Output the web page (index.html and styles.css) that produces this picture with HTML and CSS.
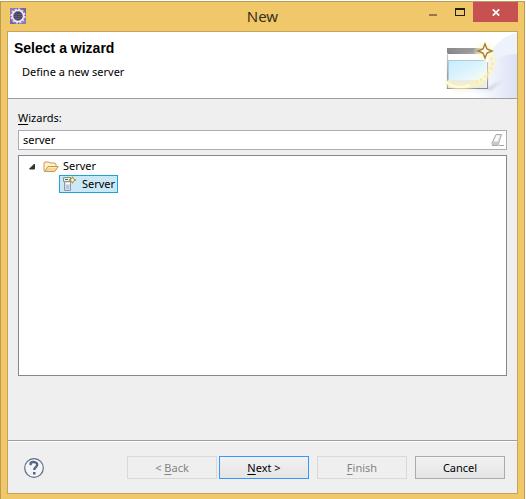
FILE: index.html
```html
<!DOCTYPE html>
<html lang="en">
<head>
<meta charset="utf-8">
<title>New</title>
<link rel="stylesheet" href="styles.css">
</head>
<body>
<div class="window">
  <header class="titlebar">
    <svg class="app-icon" width="16" height="16" viewBox="0 0 16 16" aria-hidden="true">
      <rect width="16" height="16" fill="#7763a5"/>
      <path d="M0 0h5L0 6zM16 16v-5l-6 5z" fill="#8e7ab8"/>
      <circle cx="8" cy="8" r="6.9" fill="none" stroke="#dddae4" stroke-width="1.6" stroke-dasharray="2.3 1.3"/>
      <circle cx="8" cy="8" r="5.6" fill="#4d4269" stroke="#eceaf0" stroke-width="1.7"/>
      <path d="M4 6.5h8M4 8.5h8M5 10.5h6" stroke="#6c6088" stroke-width=".8"/>
    </svg>
    <h1 class="window-title">New</h1>
    <div class="window-controls">
      <button class="control" type="button" aria-label="Minimize">
        <svg width="10" height="10" viewBox="0 0 10 10"><path d="M1 7h8v2H1z" fill="#93794c"/></svg>
      </button>
      <button class="control" type="button" aria-label="Maximize">
        <svg width="10" height="8" viewBox="0 0 10 8"><path fill-rule="evenodd" d="M0 0h10v8H0zM1 2v5h8V2z" fill="#211f1a"/></svg>
      </button>
      <button class="control control-close" type="button" aria-label="Close">
        <svg width="8" height="7" viewBox="0 0 8 7"><path d="M.8.3l6.4 6.4M7.2.3L.8 6.7" stroke="#fff" stroke-width="1.7"/></svg>
      </button>
    </div>
  </header>
  <main class="dialog">
    <section class="banner">
      <div class="banner-text">
        <h2 class="banner-title">Select a wizard</h2>
        <p class="banner-message">Define a new server</p>
      </div>
      <svg class="banner-art" width="77" height="66" viewBox="0 0 77 66" aria-hidden="true">
        <defs>
          <linearGradient id="swoosh" x1="0" y1="0" x2="1" y2="0"><stop offset="0" stop-color="#fff"/><stop offset="1" stop-color="#dbe2f6"/></linearGradient>
          <linearGradient id="bar" x1="0" y1="0" x2="1" y2="0"><stop offset="0" stop-color="#808080"/><stop offset=".65" stop-color="#a5a5a5"/><stop offset="1" stop-color="#eeeedc"/></linearGradient>
          <linearGradient id="pane" x1="0" y1="0" x2="1" y2="1"><stop offset="0" stop-color="#c6edff"/><stop offset=".45" stop-color="#d8f2fd"/><stop offset="1" stop-color="#fbfdf5"/></linearGradient>
          <linearGradient id="frame" x1="0" y1="0" x2="0" y2="1"><stop offset="0" stop-color="#ccc"/><stop offset="1" stop-color="#858b94"/></linearGradient>
          <radialGradient id="glow"><stop offset="0" stop-color="#fff6bd"/><stop offset="1" stop-color="#fff9d2" stop-opacity="0"/></radialGradient>
          <filter id="soft" x="-30%" y="-30%" width="160%" height="160%"><feGaussianBlur stdDeviation="1.6"/></filter>
        </defs>
        <path d="M77 1C63 5 54 13 48 24L34 66h43z" fill="url(#swoosh)"/>
        <path d="M77 1C66 4 59 9 53 17L50 30c8-5 17-8 27-8z" fill="#eef2fb"/>
        <path d="M46 57l17-9-12 10-43 1z" fill="#b5b3cb" opacity=".6" filter="url(#soft)"/>
        <rect x="7" y="16" width="41" height="41" fill="#fff"/>
        <rect x="7" y="16" width="40" height="6" fill="url(#bar)"/>
        <path d="M7 17h35M7 19h33" stroke="#929292"/>
        <rect x="8" y="28" width="38" height="20" fill="url(#pane)"/>
        <rect x="8" y="48" width="38" height="8" fill="#edebdd"/>
        <path d="M8 28h36v1H8zM8 28h1v20H8z" fill="#b5cbd4"/>
        <path d="M7.5 21v35.5h40V30" fill="none" stroke="url(#frame)" stroke-width="1.2"/>
        <path d="M51 22c6 15-6 29-25 33-9 2-17-1-20-6" fill="none" stroke="#fff6b8" stroke-width="5" opacity=".7" filter="url(#soft)"/>
        <circle cx="45" cy="19" r="12" fill="url(#glow)"/>
        <path d="M51 26c4 10-3 19-18 26" fill="none" stroke="#f8dda0" stroke-width="2" stroke-dasharray="2 3" opacity=".75"/>
        <path d="M6 49c4 6 14 8 24 4" fill="none" stroke="#fffbe2" stroke-width="2"/>
        <path d="M45 12l2 5 5 2-5 2-2 5-2-5-5-2 5-2z" fill="#fffced" stroke="#a97c2d" stroke-width="1.4"/>
      </svg>
    </section>
    <section class="content">
      <label class="field-label" for="filter"><u>W</u>izards:</label>
      <div class="filter">
        <input class="filter-input" id="filter" type="text" value="server">
        <button class="filter-clear" type="button" aria-label="Clear">
          <svg width="14" height="13" viewBox="0 0 14 13"><path d="M5 .5h5.5L7 11.5H1.5L1 9z" fill="#e5e5e5" stroke="#aaa"/><path d="M2 8h5.5L10 1.5 7 11H2z" fill="#c9c9c9"/><path d="M5.5 1.5h3L6.5 7H3.4z" fill="#fafafa"/><path d="M8 11.5h5" stroke="#aaa"/></svg>
        </button>
      </div>
      <div class="tree" role="tree" aria-label="Wizards">
        <div class="tree-row" role="treeitem" aria-expanded="true">
          <svg class="twisty" width="7" height="7" viewBox="0 0 7 7"><path d="M5.5 1v5h-5z" fill="#333" stroke="#333" stroke-linejoin="round"/></svg>
          <svg width="16" height="16" viewBox="0 0 16 16"><path d="M1 13V5l1-1h4l1 1h5l1 1v3" fill="#fff1cb" stroke="#c9995c"/><path d="M1.5 13.5L5 8.5h10.3l-3.5 5z" fill="#f9d794" stroke="#c9995c" stroke-linejoin="round"/><path d="M5.5 9.5h8" stroke="#ffebb7"/></svg>
          <span class="tree-text">Server</span>
        </div>
        <div class="tree-row tree-child selected" role="treeitem" aria-selected="true">
          <svg width="16" height="16" viewBox="0 0 16 16"><path d="M2.5 1.5h7v4h-7z" fill="#e9eee9" stroke="#8c927c"/><path d="M3.5 5.5h6v9h-6z" fill="#d8dfeb" stroke="#8d96a5"/><path d="M4 3h3v1H4z" fill="#23864d"/><path d="M5 7h4v1H5z" fill="#fff"/><path d="M5 9h3v4H5z" fill="#b7c3df"/><path d="M11.5.8l1 2.2 2.4 1-2.4 1-1 2.3-1-2.3-2.4-1 2.4-1z" fill="#fff9c9" stroke="#a9822c" stroke-width=".9"/></svg>
          <span class="tree-text">Server</span>
        </div>
      </div>
    </section>
    <footer class="footer">
      <button class="help" type="button" aria-label="Help">
        <svg width="20" height="20" viewBox="0 0 20 20"><circle cx="10" cy="10" r="9.3" fill="#f4f5f7" stroke="#5b6d8a" stroke-width="1.2"/><path d="M6.6 7.2V5c1.5-1.5 6.6-1.6 6.6 1.7 0 2.3-3 2.5-3 5.3" fill="none" stroke="#526582" stroke-width="2.3"/><path d="M9 14h2.5v2.5H9z" fill="#526582"/></svg>
      </button>
      <div class="actions">
        <div class="nav-actions">
          <button class="action" type="button" disabled>&lt; <u>B</u>ack</button>
          <button class="action action-default" type="button"><u>N</u>ext &gt;</button>
        </div>
        <button class="action" type="button" disabled><u>F</u>inish</button>
        <button class="action" type="button">Cancel</button>
      </div>
    </footer>
  </main>
</div>
</body>
</html>
```
FILE: styles.css
```css
* { box-sizing: border-box; }

body {
  margin: 0;
  padding: 1px 1px 0 0;
  background: #fff;
  color: #000;
  font: 11px/18px "Noto Sans", "Open Sans", sans-serif;
}

h1, h2, p { margin: 0; }
button, input { font: inherit; color: inherit; }
button { padding: 0; border: 0; background: none; }
svg { display: block; flex: none; }
u { text-underline-offset: 2px; }

.window {
  display: flex;
  flex-direction: column;
  min-height: calc(100vh - 1px);
  padding: 0 6px 5px;
  border: 1px solid #b99b54;
  border-bottom: 0;
  background: #f0c869;
}

.titlebar {
  display: grid;
  grid-template-columns: 1fr auto 1fr;
  align-items: start;
  height: 29px;
}
.app-icon { margin: 6px 0 0 3px; }
.window-title { font-size: 15px; font-weight: 400; line-height: 28px; color: #39301c; }
.window-controls { display: flex; justify-content: flex-end; }
.control { display: grid; place-items: center; width: 27px; height: 20px; }
.control-close { width: 45px; background: #c75050; }

.dialog {
  display: flex;
  flex: 1;
  flex-direction: column;
  border: 1px solid #c5a45b;
  background: #efefef;
}

.banner {
  display: flex;
  justify-content: space-between;
  border-bottom: 1px solid #a0a0a0;
  background: #fff;
}
.banner-text { padding: 7px 6px; }
.banner-title { font: bold 14px/18px "Liberation Sans", Arial, sans-serif; }
.banner-message { padding: 6px 8px; }

.content { display: flex; flex: 1; flex-direction: column; padding: 10px 10px 64px; }
.field-label { align-self: flex-start; margin-bottom: 3px; }

.filter {
  display: flex;
  align-items: center;
  height: 20px;
  margin-bottom: 5px;
  padding: 0 1px 0 4px;
  border: 1px solid #abadb3;
  background: #fff;
}
.filter-input { flex: 1; min-width: 0; height: 18px; padding: 0; border: 0; outline: 0; background: none; }

.tree { flex: 1; padding: 1px 10px; border: 1px solid #828790; background: #fff; }
.tree-row { display: flex; align-items: center; height: 18px; gap: 4px; }
.twisty { margin-right: 3px; }
.tree-child { width: 59px; margin-left: 30px; padding-left: 1px; gap: 5px; }
.selected { border: 1px solid #26a0da; background: #cbe8f6; }

.footer {
  display: flex;
  align-items: center;
  justify-content: space-between;
  padding: 15px 12px 14px 16px;
  border-top: 1px solid #a0a0a0;
  box-shadow: inset 0 1px #fff;
}
.actions { display: flex; gap: 8px; }
.nav-actions { display: flex; gap: 2px; }
.action {
  width: 90px;
  height: 23px;
  border: 1px solid #acacac;
  background: linear-gradient(#f1f1f1, #e5e5e5);
}
.action-default { border-color: #3399ff; }
.action:disabled { border-color: #d9d9d9; background: #efefef; color: #838383; }
```
